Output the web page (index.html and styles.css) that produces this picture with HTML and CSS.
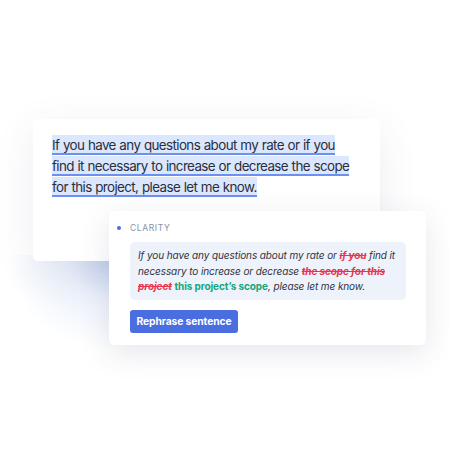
FILE: index.html
```html
<!DOCTYPE html>
<html lang="en">
<head>
	<meta charset="UTF-8">
	<title>Clarity suggestion</title>
	<link rel="stylesheet" href="styles.css">
</head>
<body>
	<div class="scene">
		<div class="doc">
			<p class="doc-text"><span class="mark">If you have any questions about my rate or if you find it necessary to increase or decrease the scope for this project, please let me know.</span></p>
		</div>
		<div class="card">
			<div class="card-head">
				<span class="dot"></span>
				<span class="label">CLARITY</span>
			</div>
			<div class="suggest">
				If you have any questions about my rate or <del>if you</del> find it necessary to increase or decrease <del>the scope for this project</del> <ins>this project’s scope</ins>, please let me know.
			</div>
			<button class="btn">Rephrase sentence</button>
		</div>
	</div>
</body>
</html>
```

FILE: styles.css
```css
* {
	margin: 0;
	padding: 0;
	box-sizing: border-box;
}
body {
	background: #fff;
	font-family: Inter, "Noto Sans", sans-serif;
	width: 450px;
	height: 450px;
	overflow: hidden;
}
.scene {
	position: relative;
	padding: 119px 0 0 33px;
}
/* blue glow behind the cards */
.scene::before {
	content: "";
	position: absolute;
	left: 0;
	top: 255px;
	width: 112px;
	height: 105px;
	background: radial-gradient(ellipse 105px 95px at 100% 0, #c6d4ef, rgba(214, 225, 246, 0.5) 45%, rgba(255, 255, 255, 0) 100%);
}
.doc {
	width: 347px;
	height: 142px;
	background: #fff;
	border-radius: 5px;
	padding: 16px 20px 0 19px;
	box-shadow: 0 10px 40px rgba(60, 70, 110, 0.09);
	position: relative;
	z-index: 1;
}
.doc-text {
	font-size: 13.4px;
	letter-spacing: -0.6px;
	word-spacing: 0.4px;
	line-height: 21px;
	color: #2a2e3b;
	width: 302px;
}
.mark {
	background: linear-gradient(#6d8ff0, #6d8ff0) left bottom / 100% 2px no-repeat, #dbe7fe;
	padding: 2px 0 2px;
}
.card {
	width: 317px;
	height: 134px;
	margin: -50px 0 0 76px;
	background: #fff;
	border-radius: 5px;
	padding: 11px 20px 0 21px;
	position: relative;
	z-index: 2;
	box-shadow: 0 8px 30px rgba(60, 70, 110, 0.13);
}
.card-head {
	display: flex;
	align-items: center;
	height: 12px;
	margin-left: -13px;
}
.dot {
	width: 4px;
	height: 4px;
	border-radius: 50%;
	background: #4a6ee0;
	margin-right: 9px;
}
.label {
	font-size: 8.5px;
	letter-spacing: 0.6px;
	color: #8c90a1;
}
.suggest {
	margin-top: 8px;
	background: #eef2fb;
	border-radius: 5px;
	padding: 6px 8px 5px 8px;
	font-size: 10px;
	letter-spacing: -0.1px;
	line-height: 15.5px;
	font-style: italic;
	color: #2f3340;
}
.suggest del {
	color: #e8344f;
	font-weight: 700;
}
.suggest ins {
	color: #17a57b;
	font-weight: 700;
	font-style: normal;
	text-decoration: none;
}
.btn {
	display: block;
	margin-top: 10px;
	width: 108px;
	height: 23px;
	border: none;
	border-radius: 3px;
	background: #4a6ee0;
	color: #fff;
	font-family: Inter, "Noto Sans", sans-serif;
	font-size: 10.3px;
	letter-spacing: -0.1px;
	font-weight: 700;
	white-space: nowrap;
}
```
